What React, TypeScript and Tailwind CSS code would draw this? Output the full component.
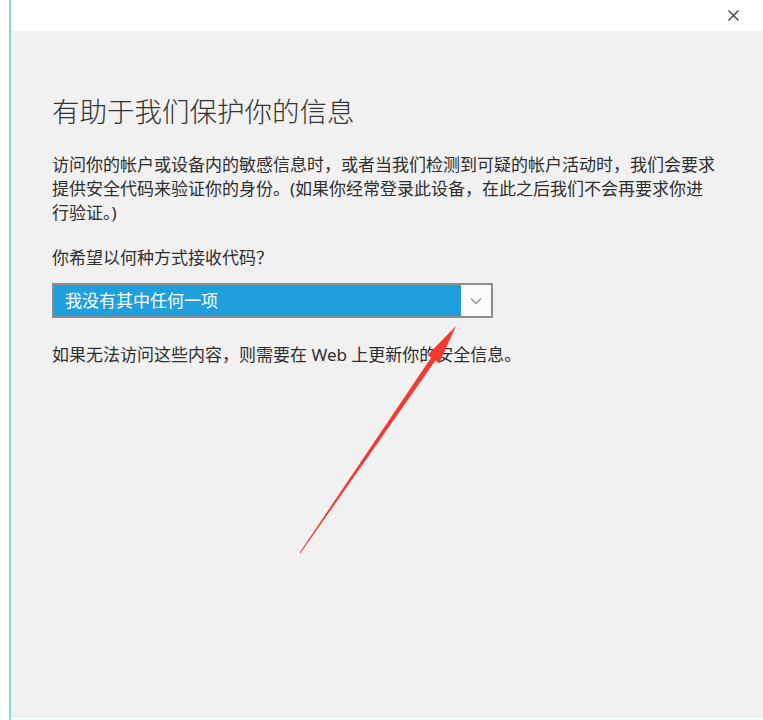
const font = { fontFamily: '"Noto Sans", "Noto Sans CJK SC", sans-serif' };

function Chevron() {
  return (
    <svg width="12" height="8" viewBox="0 0 12 8" fill="none">
      <path d="M1 1.5 L6 6.5 L11 1.5" stroke="#8a8a8a" strokeWidth="1.2" />
    </svg>
  );
}

function Arrow() {
  return (
    <svg
      className="absolute left-0 top-0 pointer-events-none"
      width="763"
      height="720"
      viewBox="0 0 763 720"
    >
      <polygon
        points="456,326 439.1,363 435.4,360.4 300.4,553.3 299.6,552.7 431.2,357.6 427.5,355"
        fill="#f23a33"
      />
    </svg>
  );
}

export default function App() {
  return (
    <div className="relative w-[763px] h-[720px] bg-white overflow-hidden" style={font}>
      <div className="flex h-full">
        <div className="w-[9px] bg-white" />
        <div className="w-[2px] bg-[#86dcd6]" />
        <div className="flex-1 flex flex-col">
          <header className="h-[31px] bg-white flex justify-end items-center pr-[24px]">
            <svg width="11" height="11" viewBox="0 0 11 11">
              <path d="M0.5 0.5 L10.5 10.5 M10.5 0.5 L0.5 10.5" stroke="#333" strokeWidth="1.2" />
            </svg>
          </header>

          <main className="flex-1 bg-[#f1f1f1] pl-[41px] pt-[63px] text-[#2e2e2e]">
            <h1 className="text-[27.5px] leading-[36px] font-light text-[#333]">
              有助于我们保护你的信息
            </h1>

            <p className="mt-[23px] w-[690px] text-[17px] leading-[24px]">
              访问你的帐户或设备内的敏感信息时，或者当我们检测到可疑的帐户活动时，我们会要求
              <br />
              提供安全代码来验证你的身份。(如果你经常登录此设备，在此之后我们不会再要求你进
              <br />
              行验证。)
            </p>

            <p className="mt-[21px] text-[17px] leading-[24px]">你希望以何种方式接收代码？</p>

            <div className="mt-[13px] w-[441px] h-[35px] flex border-2 border-[#8c8c8c]">
              <div className="flex-1 bg-[#1f9fdb] text-white text-[17px] flex items-center pl-[11px]">
                我没有其中任何一项
              </div>
              <div className="w-[30px] bg-[#fafafa] flex items-center justify-center">
                <Chevron />
              </div>
            </div>

            <p className="mt-[25px] text-[17px] leading-[24px]">
              如果无法访问这些内容，则需要在 Web 上更新你的安全信息。
            </p>
          </main>

          <div className="h-[1px] bg-[#d6efec]" />
          <div className="h-[3px] bg-white" />
        </div>
      </div>
      <Arrow />
    </div>
  );
}
